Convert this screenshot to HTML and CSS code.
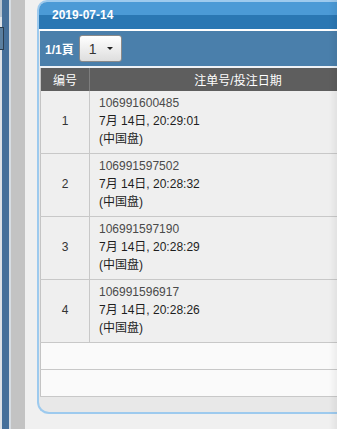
FILE: index.html
```html
<!DOCTYPE html>
<html lang="zh">
<head>
    <meta charset="UTF-8">
    <meta name="viewport" content="width=device-width, initial-scale=1.0">
    <title>注单</title>
    <link rel="stylesheet" href="styles.css">
</head>
<body>
    <div class="page">
        <div class="side">
            <div class="side-blue">
                <div class="side-tab"></div>
                <div class="side-box"></div>
            </div>
            <div class="side-line"></div>
            <div class="side-grey"></div>
        </div>

        <section class="panel">
            <div class="panel-title">2019-07-14</div>
            <div class="panel-body">
                <div class="toolbar">
                    <span class="pages">1/1頁</span>
                    <button class="page-select">1 <span class="caret"></span></button>
                </div>

                <table class="bets">
                    <thead>
                        <tr>
                            <th class="col-no">编号</th>
                            <th>注单号/投注日期</th>
                        </tr>
                    </thead>
                    <tbody>
                        <tr>
                            <td class="col-no">1</td>
                            <td>
                                <div class="bet-id">106991600485</div>
                                <div>7月 14日, 20:29:01</div>
                                <div>(中国盘)</div>
                            </td>
                        </tr>
                        <tr>
                            <td class="col-no">2</td>
                            <td>
                                <div class="bet-id">106991597502</div>
                                <div>7月 14日, 20:28:32</div>
                                <div>(中国盘)</div>
                            </td>
                        </tr>
                        <tr>
                            <td class="col-no">3</td>
                            <td>
                                <div class="bet-id">106991597190</div>
                                <div>7月 14日, 20:28:29</div>
                                <div>(中国盘)</div>
                            </td>
                        </tr>
                        <tr>
                            <td class="col-no">4</td>
                            <td>
                                <div class="bet-id">106991596917</div>
                                <div>7月 14日, 20:28:26</div>
                                <div>(中国盘)</div>
                            </td>
                        </tr>
                        <tr class="empty"><td colspan="2"></td></tr>
                        <tr class="empty"><td colspan="2"></td></tr>
                    </tbody>
                </table>
                <div class="panel-foot"></div>
            </div>
        </section>
    </div>
</body>
</html>
```

FILE: styles.css
```css
/* General */
body {
    margin: 0;
    width: 337px;
    height: 429px;
    overflow: hidden;
    background: #f0f0f0;
    font-family: "Liberation Sans", Arial, "Noto Sans CJK SC", sans-serif;
    font-size: 12px;
    color: #222;
}

body::after {
    content: "";
    position: fixed;
    top: 0;
    right: 0;
    width: 8px;
    height: 100%;
    background: linear-gradient(to right, rgba(0, 0, 0, 0), rgba(0, 0, 0, 0.05));
}

.page {
    display: flex;
    height: 429px;
}

/* Left side strip */
.side {
    display: flex;
    flex-shrink: 0;
    width: 25px;
    margin-right: 12px;
}

.side-blue {
    width: 7px;
    border-left: 2px solid #dfe3e7;
    background: #46709a;
}

.side-tab {
    height: 17px;
    width: 2px;
    margin-left: -2px;
    background: #b9c4cf;
}

.side-box {
    height: 21px;
    width: 3px;
    margin: 10px 0 0 -2px;
    border: 1px solid #2c3e50;
    border-left: none;
    background: #5b7f9f;
}

.side-line {
    width: 2px;
    background: #d7dde3;
}

.side-grey {
    flex: 1;
    background: #c3c3c3;
}

/* Panel */
.panel {
    flex-shrink: 0;
    width: 347px;
    height: 410px;
    border: 2px solid #9dcaee;
    border-right: none;
    border-radius: 10px 0 0 12px;
    background: #e8e8e8;
    overflow: hidden;
}

.panel-title {
    height: 27px;
    line-height: 27px;
    padding-left: 13px;
    border-bottom: 2px solid #fff;
    background: linear-gradient(to bottom, #4b9ad6 0, #4b9ad6 13px, #2a77b3 13px, #2a77b3 100%);
    color: #fff;
    font-weight: bold;
}

.panel-body {
    padding-left: 1px;
}

.toolbar {
    display: flex;
    align-items: center;
    gap: 5px;
    height: 35px;
    padding-left: 5px;
    border-bottom: 2px solid #eef2f6;
    background: #4a7fab;
}

.pages {
    color: #fff;
    font-weight: bold;
}

.page-select {
    display: flex;
    align-items: center;
    gap: 11px;
    width: 43px;
    height: 27px;
    padding: 0 0 0 9px;
    border: 1px solid #8a8a8a;
    border-radius: 3px;
    background: linear-gradient(to bottom, #ffffff, #dedede);
    font-family: inherit;
    font-size: 14px;
    color: #333;
}

.caret {
    width: 0;
    height: 0;
    border-left: 3px solid transparent;
    border-right: 3px solid transparent;
    border-top: 3px solid #222;
}

/* Table */
.bets {
    width: 100%;
    border-collapse: collapse;
    border-left: 1px solid #c4c4c4;
}

.bets th {
    height: 23px;
    padding: 0;
    background: #5e5e5e;
    color: #fff;
    font-weight: normal;
}

.bets th.col-no {
    border-right: 1px solid #7d7d7d;
}

.bets td {
    height: 54px;
    padding: 3px 9px 5px;
    border-bottom: 1px solid #c8c8c8;
    background: #efefef;
    line-height: 18px;
    color: #1e1e1e;
}

.bets td.col-no {
    width: 30px;
    text-align: center;
    border-right: 1px solid #c8c8c8;
    color: #333;
}

.bet-id {
    color: #4a4a4a;
}

.bets tr.empty td {
    height: 26px;
    padding: 0;
    background: #fafafa;
}

.panel-foot {
    height: 13px;
}
```
